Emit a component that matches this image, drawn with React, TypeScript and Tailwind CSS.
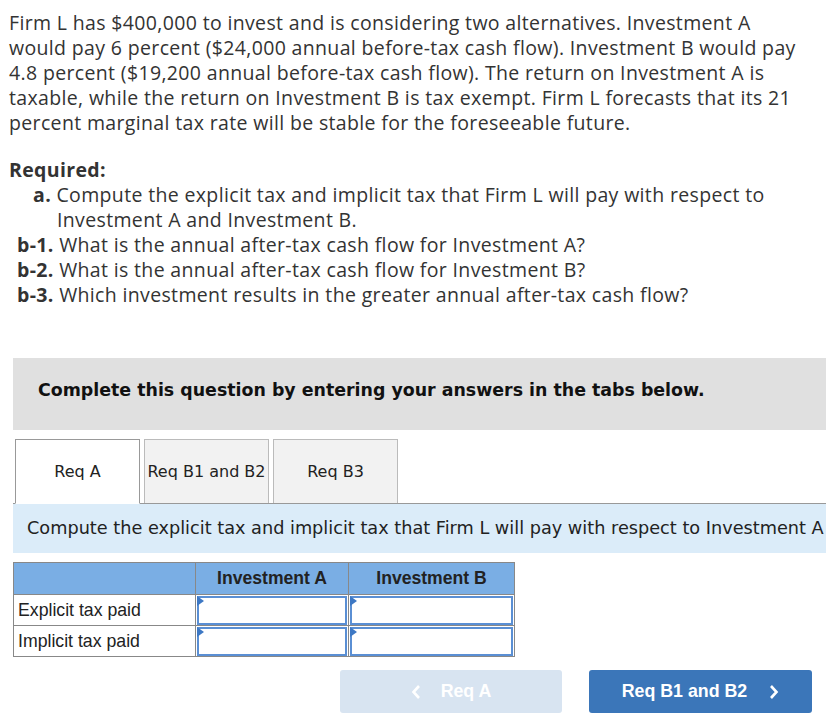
import React from "react";

const body = { fontFamily: '"Open Sans", sans-serif' };
const verd = { fontFamily: '"DejaVu Sans", Verdana, sans-serif' };
const arial = { fontFamily: '"Liberation Sans", Arial, sans-serif' };

function InputCell() {
  return (
    <td className="border border-[#888] p-0 h-[31px]">
      <div className="relative mx-[1px] h-[29px] border-2 border-[#5a8fd4] bg-white">
        <div className="absolute left-[-2px] top-[-2px] w-0 h-0 border-t-[5px] border-b-[5px] border-l-[7px] border-t-transparent border-b-transparent border-l-[#3d78c4]" />
      </div>
    </td>
  );
}

function Chevron({ dir }: { dir: "l" | "r" }) {
  return (
    <svg width="10" height="16" viewBox="0 0 10 16" className="shrink-0">
      <path
        d={dir === "l" ? "M8 2 L2.5 8 L8 14" : "M2 2 L7.5 8 L2 14"}
        fill="none"
        stroke="white"
        strokeWidth="2.6"
      />
    </svg>
  );
}

export default function App() {
  const lines = [
    "Firm L has $400,000 to invest and is considering two alternatives. Investment A",
    "would pay 6 percent ($24,000 annual before-tax cash flow). Investment B would pay",
    "4.8 percent ($19,200 annual before-tax cash flow). The return on Investment A is",
    "taxable, while the return on Investment B is tax exempt. Firm L forecasts that its 21",
    "percent marginal tax rate will be stable for the foreseeable future.",
  ];
  return (
    <div className="w-[838px] h-[727px] bg-white text-[#333] overflow-hidden">
      <div style={body} className="pl-[9px] pt-[10px] text-[19.5px] leading-[25px] tracking-[0.35px]">
        {lines.map((l, i) => (
          <div key={i} className="whitespace-nowrap">{l}</div>
        ))}
        <div className="mt-[22px] font-bold">Required:</div>
        <div className="whitespace-nowrap pl-[24px]"><b>a.</b> Compute the explicit tax and implicit tax that Firm L will pay with respect to</div>
        <div className="whitespace-nowrap pl-[48px]">Investment A and Investment B.</div>
        <div className="whitespace-nowrap pl-[8px]"><b>b-1.</b> What is the annual after-tax cash flow for Investment A?</div>
        <div className="whitespace-nowrap pl-[8px]"><b>b-2.</b> What is the annual after-tax cash flow for Investment B?</div>
        <div className="whitespace-nowrap pl-[8px]"><b>b-3.</b> Which investment results in the greater annual after-tax cash flow?</div>
      </div>

      <div className="ml-[13px] w-[813px] mt-[51px]">
        <div className="h-[72px] bg-[#e0e0e0] flex items-center pl-[25px] pb-[8px] whitespace-nowrap">
          <span style={verd} className="font-bold text-[17.4px] text-[#111]">Complete this question by entering your answers in the tabs below.</span>
        </div>

        <div className="mt-[10px] flex items-end h-[64px] border-b border-[#999]" style={verd}>
          <div className="ml-[2px] w-[125px] h-[65px] -mb-px bg-white border border-[#999] border-b-white flex items-center justify-center text-[16px] text-[#222] whitespace-nowrap">Req A</div>
          <div className="ml-[4px] w-[125px] h-[64px] bg-[#f2f2f2] border border-[#bbb] border-b-0 flex items-center justify-center text-[16px] text-[#222] whitespace-nowrap">Req B1 and B2</div>
          <div className="ml-[4px] w-[125px] h-[64px] bg-[#f2f2f2] border border-[#bbb] border-b-0 flex items-center justify-center text-[16px] text-[#222] whitespace-nowrap">Req B3</div>
        </div>

        <div className="h-[49px] bg-[#dbecf9] flex items-center pl-[14px] whitespace-nowrap">
          <span style={verd} className="text-[17.7px] text-[#222]">Compute the explicit tax and implicit tax that Firm L will pay with respect to Investment A</span>
        </div>

        <table style={arial} className="mt-[9px] border-collapse text-[#222]">
          <tbody>
            <tr className="bg-[#7aaee4] h-[32px]">
              <td className="border border-[#888] w-[182px]"></td>
              <td className="border border-[#888] w-[153px] text-center font-bold text-[17.6px]">Investment A</td>
              <td className="border border-[#888] w-[166px] text-center font-bold text-[17.6px]">Investment B</td>
            </tr>
            <tr>
              <td className="border border-[#888] pl-[4px] text-[17.7px]">Explicit tax paid</td>
              <InputCell />
              <InputCell />
            </tr>
            <tr>
              <td className="border border-[#888] pl-[4px] text-[17.7px]">Implicit tax paid</td>
              <InputCell />
              <InputCell />
            </tr>
          </tbody>
        </table>

        <div className="mt-[13px] flex" style={arial}>
          <div className="ml-[327px] w-[222px] h-[43px] rounded-[3px] bg-[#d8e4f1] flex items-center justify-center text-white font-bold text-[17.8px]">
            <span className="mr-[20px]"><Chevron dir="l" /></span>Req A
          </div>
          <div className="ml-[27px] w-[223px] h-[43px] rounded-[3px] bg-[#3b76b9] flex items-center justify-center text-white font-bold text-[17.8px]">
            Req B1 and B2<span className="ml-[22px]"><Chevron dir="r" /></span>
          </div>
        </div>
      </div>
    </div>
  );
}
